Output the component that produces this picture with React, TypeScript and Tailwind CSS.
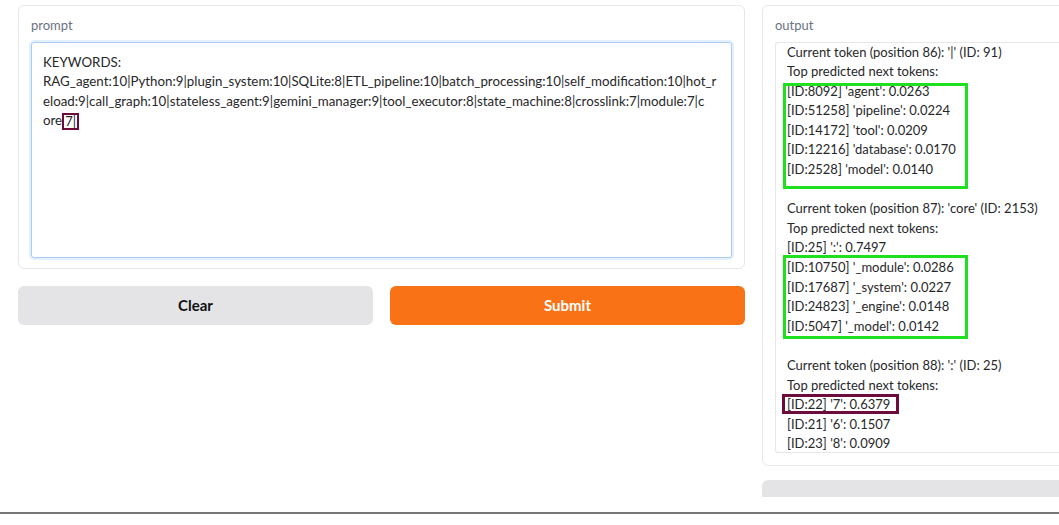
import React from 'react';

const font = { fontFamily: 'Lato, "Noto Sans", sans-serif' };

type Group = { current: string; lines: string[]; green?: number; maroon?: boolean };

const groups: Group[] = [
  {
    current: "Current token (position 86): '|' (ID: 91)",
    lines: [
      "[ID:8092] 'agent': 0.0263",
      "[ID:51258] 'pipeline': 0.0224",
      "[ID:14172] 'tool': 0.0209",
      "[ID:12216] 'database': 0.0170",
      "[ID:2528] 'model': 0.0140",
    ],
    green: 0,
  },
  {
    current: "Current token (position 87): 'core' (ID: 2153)",
    lines: [
      "[ID:25] ':': 0.7497",
      "[ID:10750] '_module': 0.0286",
      "[ID:17687] '_system': 0.0227",
      "[ID:24823] '_engine': 0.0148",
      "[ID:5047] '_model': 0.0142",
    ],
    green: 1,
  },
  {
    current: "Current token (position 88): ':' (ID: 25)",
    lines: ["[ID:22] '7': 0.6379", "[ID:21] '6': 0.1507", "[ID:23] '8': 0.0909"],
    maroon: true,
  },
];

const prompt = [
  'KEYWORDS:',
  'RAG_agent:10|Python:9|plugin_system:10|SQLite:8|ETL_pipeline:10|batch_processing:10|self_modification:10|hot_r',
  'eload:9|call_graph:10|stateless_agent:9|gemini_manager:9|tool_executor:8|state_machine:8|crosslink:7|module:7|c',
];

function TokenGroup({ g }: { g: Group }) {
  return (
    <div className="pb-[19.6px]">
      <div className="h-[19.6px] whitespace-nowrap">{g.current}</div>
      <div className="h-[19.6px] whitespace-nowrap">Top predicted next tokens:</div>
      <div className="relative">
        {g.lines.map((l, i) => (
          <div key={i} className="h-[19.6px] whitespace-nowrap">{l}</div>
        ))}
        {g.green === 0 && (
          <div className="absolute left-[-4px] top-[1px] w-[185px] h-[106px] border-[3px] border-[#1fe01f]" />
        )}
        {g.green === 1 && (
          <div className="absolute left-[-4px] top-[17px] w-[185px] h-[84px] border-[3px] border-[#1fe01f]" />
        )}
        {g.maroon && (
          <div className="absolute left-[-5px] top-[-1px] w-[117px] h-[20px] border-[3px] border-[#6d0b3d]" />
        )}
      </div>
    </div>
  );
}

export default function App() {
  return (
    <div className="w-[1059px] h-[525px] overflow-hidden bg-white text-[#1f2937]" style={font}>
      <div className="flex gap-[17px] pl-[18px] pt-[5px] h-[512px]">
        <div className="w-[727px] shrink-0 flex flex-col gap-[17px]">
          <div className="border border-gray-200 rounded-md px-[12px] pt-[10px] pb-[10px]">
            <div className="text-[13px] text-gray-500 mb-[6px]">prompt</div>
            <div className="h-[216px] border border-[#a9cdf0] rounded-[3px] shadow-[0_0_0_2px_#e3effb] px-[11px] pt-[10px] text-[13.3px] leading-[19.6px] text-[#27272a]">
              {prompt.map((l, i) => (
                <div key={i} className="whitespace-nowrap">{l}</div>
              ))}
              <div className="whitespace-nowrap flex items-center">
                <span>ore</span>
                <span className="inline-block h-[17px] border-[2.5px] border-[#6d0b3d] pl-[1px] pr-[1px] leading-[12px] text-[13px]">7|</span>
              </div>
            </div>
          </div>
          <div className="flex gap-[17px]">
            <button className="flex-1 h-[39px] rounded-md bg-[#e4e4e7] text-[15px] font-bold text-[#111]">Clear</button>
            <button className="flex-1 h-[39px] rounded-md bg-[#f97316] text-[15px] font-bold text-white">Submit</button>
          </div>
        </div>
        <div className="w-[420px] shrink-0 flex flex-col">
          <div className="h-[461px] border border-gray-200 rounded-md pl-[12px] pt-[10px] pb-[12px] flex flex-col">
            <div className="text-[13px] text-gray-500 mb-[6px]">output</div>
            <div className="flex-1 border-l border-t border-b border-gray-200 rounded-l-[3px] overflow-hidden pl-[11px] text-[13px] leading-[19.6px] text-[#27272a]">
              {groups.map((g, i) => (
                <TokenGroup key={i} g={g} />
              ))}
            </div>
          </div>
          <div className="mt-[14px] h-[17px] bg-[#e4e4e7] rounded-t-md" />
        </div>
      </div>
      <div className="h-[2px] bg-[#777]" />
    </div>
  );
}
